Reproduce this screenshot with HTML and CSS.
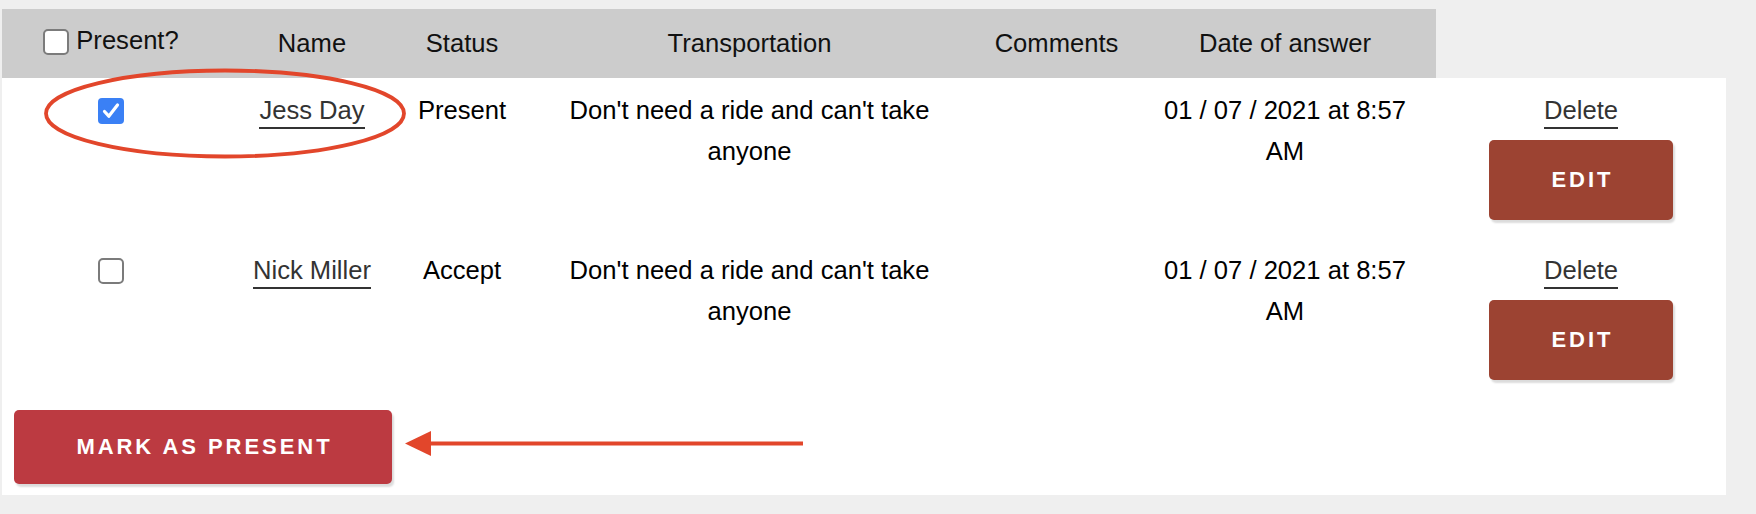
FILE: index.html
```html
<!DOCTYPE html>
<html lang="en">
	<head>
		<meta charset="utf-8" />
		<title>Guests</title>
		<link rel="stylesheet" href="styles.css">
	</head>
	<body>
		<div class="page">
			<div class="sheet">
				<table class="guests">
					<colgroup>
						<col class="c-present">
						<col class="c-name">
						<col class="c-status">
						<col class="c-ride">
						<col class="c-comments">
						<col class="c-date">
						<col class="c-actions">
					</colgroup>
					<thead>
						<tr>
							<th>
								<label class="head-check">
									<span class="box"></span>
									Present?
								</label>
							</th>
							<th>Name</th>
							<th>Status</th>
							<th>Transportation</th>
							<th>Comments</th>
							<th>Date of answer</th>
							<th class="blank"></th>
						</tr>
					</thead>
					<tbody>
						<tr>
							<td>
								<span class="box checked">
									<svg width="26" height="26" viewBox="0 0 26 26"><path d="M6.5 13.5 L10.8 18.2 L19.5 7" fill="none" stroke="#fff" stroke-width="3.2" stroke-linecap="round" stroke-linejoin="round"/></svg>
								</span>
							</td>
							<td><a class="link" href="#">Jess Day</a></td>
							<td>Present</td>
							<td>Don't need a ride and can't take anyone</td>
							<td></td>
							<td>01 / 07 / 2021 at 8:57 AM</td>
							<td>
								<a class="link" href="#">Delete</a>
								<button class="edit">Edit</button>
							</td>
						</tr>
						<tr>
							<td><span class="box"></span></td>
							<td><a class="link" href="#">Nick Miller</a></td>
							<td>Accept</td>
							<td>Don't need a ride and can't take anyone</td>
							<td></td>
							<td>01 / 07 / 2021 at 8:57 AM</td>
							<td>
								<a class="link" href="#">Delete</a>
								<button class="edit">Edit</button>
							</td>
						</tr>
					</tbody>
				</table>
				<div class="actions">
					<button class="mark">Mark as present</button>
				</div>
			</div>

			<!-- annotation drawn over the screenshot -->
			<svg class="notes" width="1756" height="514" viewBox="0 0 1756 514">
				<ellipse cx="225" cy="113.5" rx="179" ry="43" fill="none" stroke="#e2462b" stroke-width="3.8"/>
				<line x1="428" y1="443.5" x2="803" y2="443.5" stroke="#e2462b" stroke-width="4"/>
				<polygon points="405,443.5 431,431 431,456" fill="#e2462b"/>
			</svg>
		</div>
	</body>
</html>
```

FILE: styles.css
```css
body {
	margin: 0;
	background: #efefef;
	font-family: "Liberation Sans", Arial, Helvetica, sans-serif;
	color: #111;
}

.page {
	position: relative;
	width: 1756px;
	height: 514px;
	overflow: hidden;
}

.sheet {
	width: 1724px;
	margin: 9px 0 0 2px;
}

.guests {
	width: 1724px;
	table-layout: fixed;
	border-collapse: collapse;
	border-spacing: 0;
	font-size: 25.6px;
	line-height: 41px;
}

.c-present { width: 218px; }
.c-name { width: 184px; }
.c-status { width: 116px; }
.c-ride { width: 459px; }
.c-comments { width: 155px; }
.c-date { width: 302px; }
.c-actions { width: 290px; }

th {
	height: 69px;
	padding: 0 12px;
	background: #cccccc;
	font-weight: normal;
	text-align: center;
	vertical-align: middle;
}

th.blank {
	background: transparent;
}

td {
	padding: 12px 12px 18px;
	background: #fff;
	text-align: center;
	vertical-align: top;
	color: #000;
}

.head-check {
	display: inline-flex;
	align-items: center;
	gap: 7px;
}

.box {
	display: inline-block;
	box-sizing: border-box;
	width: 26px;
	height: 26px;
	border: 2px solid #7b7b7b;
	border-radius: 5px;
	background: #fff;
	vertical-align: middle;
}

th .box {
	margin-top: 2px;
}

td .box {
	display: block;
	margin: 7.5px auto;
}

.box.checked {
	border: none;
	border-radius: 4px;
	background: #3a80f5;
}

.box svg {
	display: block;
}

.link {
	color: #333;
	text-decoration: none;
	padding-bottom: 3px;
	border-bottom: 2px solid #333;
}

.edit,
.mark {
	display: block;
	border: none;
	border-radius: 5px;
	color: #fff;
	font-family: "Liberation Sans", Arial, Helvetica, sans-serif;
	font-weight: bold;
	font-size: 22px;
	letter-spacing: 2.95px;
	padding: 0 0 0 2.95px;
	text-transform: uppercase;
	box-shadow: 2px 3px 2px rgba(0, 0, 0, 0.14);
	cursor: pointer;
}

.edit {
	width: 184px;
	height: 80px;
	margin: 9px auto 0;
	background: #9c4332;
}

.actions {
	background: #fff;
	padding: 12px 0 11px 12px;
}

.mark {
	width: 378px;
	height: 74px;
	background: #bc3a41;
}

.notes {
	position: absolute;
	top: 0;
	left: 0;
	pointer-events: none;
}
```
